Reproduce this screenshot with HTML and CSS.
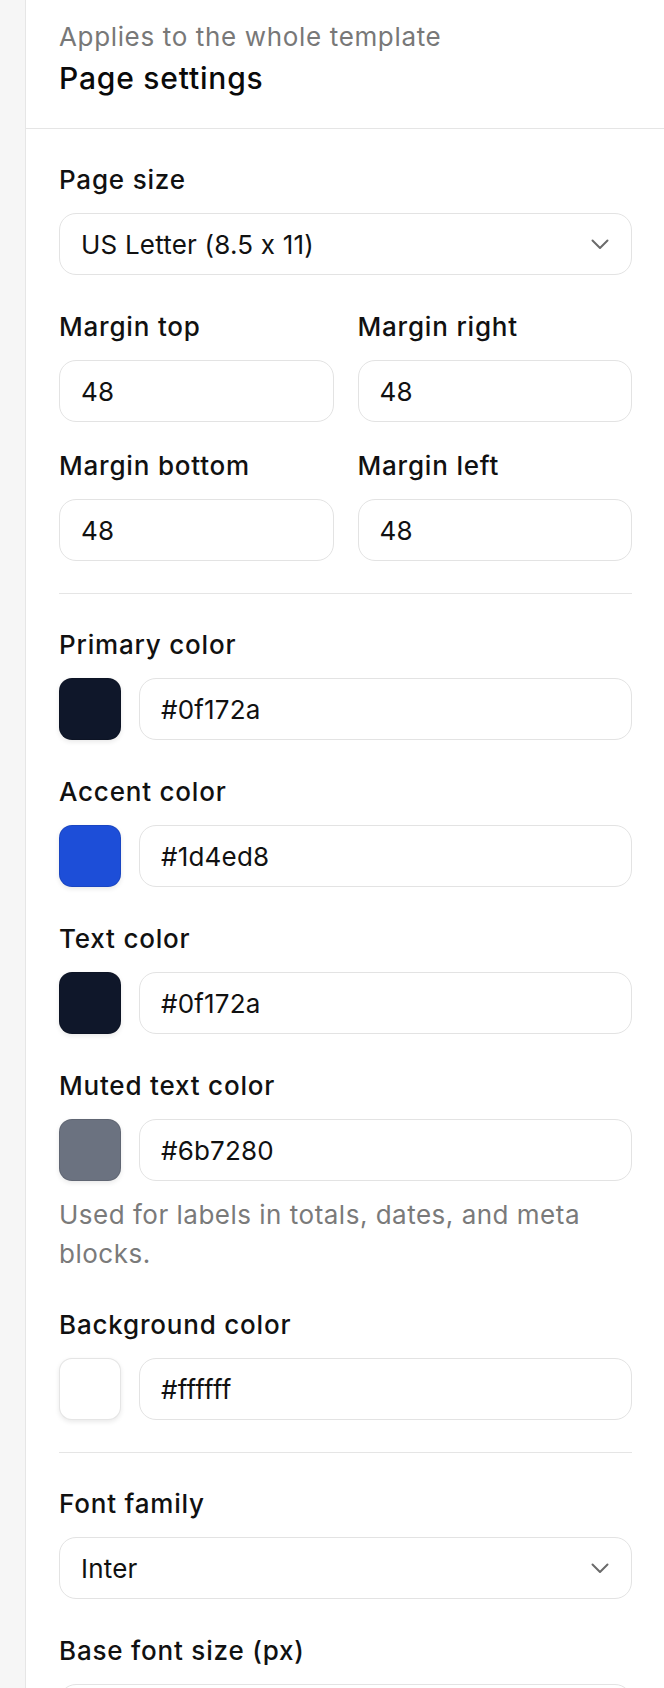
FILE: index.html
```html
<!DOCTYPE html>
<html lang="en">

<head>
  <meta charset="UTF-8" />
  <meta name="viewport" content="width=device-width, initial-scale=1.0" />
  <title>Page settings</title>
  <link rel="stylesheet" href="styles.css">
</head>

<body>
  <div class="layout">
    <div class="rail"></div>

    <aside class="panel">
      <!-- Panel header -->
      <div class="panel-header">
        <p class="panel-subtitle">Applies to the whole template</p>
        <h2 class="panel-title">Page settings</h2>
      </div>

      <!-- Page size and margins -->
      <div class="section">
        <div class="field">
          <label class="field-label">Page size</label>
          <div class="select">
            <span>US Letter (8.5 x 11)</span>
            <svg class="chevron" width="18" height="11" viewBox="0 0 18 11">
              <polyline points="1.5,1.5 9,9 16.5,1.5" fill="none" stroke="#6b6b6b" stroke-width="2" stroke-linecap="round" stroke-linejoin="round" />
            </svg>
          </div>
        </div>

        <div class="field-grid">
          <div class="field">
            <label class="field-label">Margin top</label>
            <input class="text-input" type="text" value="48" />
          </div>
          <div class="field">
            <label class="field-label">Margin right</label>
            <input class="text-input" type="text" value="48" />
          </div>
          <div class="field">
            <label class="field-label">Margin bottom</label>
            <input class="text-input" type="text" value="48" />
          </div>
          <div class="field">
            <label class="field-label">Margin left</label>
            <input class="text-input" type="text" value="48" />
          </div>
        </div>
      </div>

      <!-- Colors -->
      <div class="section">
        <div class="field">
          <label class="field-label">Primary color</label>
          <div class="color-row">
            <span class="swatch" style="background: #0f172a"></span>
            <input class="text-input" type="text" value="#0f172a" />
          </div>
        </div>

        <div class="field">
          <label class="field-label">Accent color</label>
          <div class="color-row">
            <span class="swatch" style="background: #1d4ed8"></span>
            <input class="text-input" type="text" value="#1d4ed8" />
          </div>
        </div>

        <div class="field">
          <label class="field-label">Text color</label>
          <div class="color-row">
            <span class="swatch" style="background: #0f172a"></span>
            <input class="text-input" type="text" value="#0f172a" />
          </div>
        </div>

        <div class="field">
          <label class="field-label">Muted text color</label>
          <div class="color-row">
            <span class="swatch" style="background: #6b7280"></span>
            <input class="text-input" type="text" value="#6b7280" />
          </div>
          <p class="field-help">Used for labels in totals, dates, and meta blocks.</p>
        </div>

        <div class="field">
          <label class="field-label">Background color</label>
          <div class="color-row">
            <span class="swatch" style="background: #ffffff"></span>
            <input class="text-input" type="text" value="#ffffff" />
          </div>
        </div>
      </div>

      <!-- Typography -->
      <div class="section">
        <div class="field">
          <label class="field-label">Font family</label>
          <div class="select">
            <span>Inter</span>
            <svg class="chevron" width="18" height="11" viewBox="0 0 18 11">
              <polyline points="1.5,1.5 9,9 16.5,1.5" fill="none" stroke="#6b6b6b" stroke-width="2" stroke-linecap="round" stroke-linejoin="round" />
            </svg>
          </div>
        </div>

        <div class="field">
          <label class="field-label">Base font size (px)</label>
          <input class="text-input" type="text" value="10" />
        </div>
      </div>
    </aside>
  </div>
</body>

</html>
```

FILE: styles.css
```css
/* Reset */
* {
  margin: 0;
  padding: 0;
  box-sizing: border-box;
}

body {
  font-family: "Inter", "Noto Sans", sans-serif;
  font-feature-settings: "calt" 0;
  color: #111111;
  background: #ffffff;
  overflow: hidden;
}

/* Page layout */
.layout {
  display: flex;
  min-height: 100vh;
}

.rail {
  width: 26px;
  flex-shrink: 0;
  background: #f6f6f6;
  border-right: 1px solid #e6e6e6;
}

.panel {
  flex: 1;
  background: #ffffff;
}

/* Header */
.panel-header {
  padding: 17px 32px 30px 33px;
  border-bottom: 1px solid #e5e5e5;
}

.panel-subtitle {
  font-size: 26px;
  line-height: 39px;
  letter-spacing: 0.65px;
  color: #787878;
}

.panel-title {
  margin-top: 2px;
  font-size: 30px;
  line-height: 40px;
  font-weight: 500;
  letter-spacing: 0.8px;
  color: #0a0a0a;
}

/* Sections */
.section {
  display: flex;
  flex-direction: column;
  gap: 32px;
  margin: 0 32px 0 33px;
  padding: 31px 0 32px;
  border-bottom: 1px solid #e5e5e5;
}

.section:last-child {
  border-bottom: none;
}

.field {
  display: flex;
  flex-direction: column;
  gap: 14px;
}

.field-grid {
  display: grid;
  grid-template-columns: 1fr 1fr;
  column-gap: 24px;
  row-gap: 24px;
}

.field-label {
  font-size: 26px;
  line-height: 39px;
  font-weight: 500;
  letter-spacing: 0.8px;
  color: #111111;
}

.field-help {
  font-size: 26px;
  line-height: 39px;
  letter-spacing: 0.5px;
  color: #7a7a7a;
}

/* Inputs */
.text-input,
.select {
  width: 100%;
  height: 62px;
  padding: 0 21px;
  font-family: inherit;
  font-feature-settings: "calt" 0;
  font-size: 26px;
  letter-spacing: 0.2px;
  color: #111111;
  background: #ffffff;
  border: 1px solid #e3e3e3;
  border-radius: 17px;
  outline: none;
}

.select {
  display: flex;
  align-items: center;
  justify-content: space-between;
  padding-right: 22px;
}

.chevron {
  display: block;
}

.color-row {
  display: flex;
  align-items: center;
  gap: 18px;
}

.color-row .text-input {
  flex: 1;
}

.swatch {
  width: 62px;
  height: 62px;
  flex-shrink: 0;
  border-radius: 13px;
  border: 1px solid rgba(0, 0, 0, 0.1);
  box-shadow: 0 2px 5px rgba(0, 0, 0, 0.09);
}
```
